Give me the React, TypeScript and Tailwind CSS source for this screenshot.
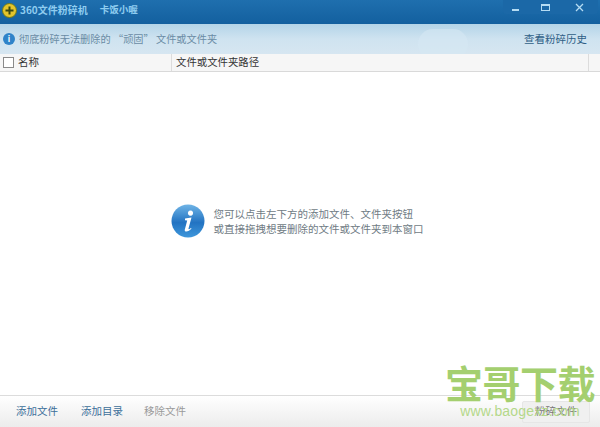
export default function App() {
  const font = { fontFamily: '"Noto Sans CJK SC", "Liberation Sans", sans-serif' };
  return (
    <div style={font} className="relative w-[600px] h-[427px] overflow-hidden bg-white flex flex-col">
      {/* Title bar */}
      <div className="h-[24px] shrink-0 flex items-start justify-between bg-gradient-to-b from-[#1f6fae] to-[#13609f]">
        <div className="flex items-center h-[20px] pl-[2px] gap-[3px]">
          <svg width="15" height="15" viewBox="0 0 15 15">
            <circle cx="7.5" cy="7.5" r="7" fill="#e3c52c" stroke="#6d7a1e" strokeWidth="1" />
            <path d="M7.5 3.5v8M3.5 7.5h8" stroke="#3b4a12" strokeWidth="2" />
          </svg>
          <span className="text-[10px] font-bold text-[#8fcdf0] leading-none">360文件粉碎机</span>
          <span className="text-[9.5px] font-bold text-[#8fcdf0] leading-none ml-[9px]">卡饭小喔</span>
        </div>
        <div className="flex h-[14px] w-[95px] mr-[2px] rounded-b-[3px] bg-[#1b68a7]">
          <div className="flex-1 flex items-center justify-center pr-[6px]">
            <div className="w-[7px] h-[2px] bg-[#b5dcf3] mt-[5px]" />
          </div>
          <div className="flex-1 flex items-center justify-center pr-[10px]">
            <div className="w-[9px] h-[7px] border border-[#b5dcf3] border-t-2" />
          </div>
          <div className="flex-1 flex items-center justify-center pr-[6px]">
            <svg width="9" height="9" viewBox="0 0 9 9">
              <path d="M1 1l7 7M8 1l-7 7" stroke="#b5dcf3" strokeWidth="1.3" />
            </svg>
          </div>
        </div>
      </div>
      {/* Info bar */}
      <div className="relative h-[30px] shrink-0 flex items-center justify-between bg-gradient-to-b from-[#b3d4e8] via-[#cfe3f0] to-[#d6e6f1] pl-[3px] pr-[13px] overflow-hidden">
        <div className="absolute left-[418px] top-[5px] w-[50px] h-[30px] rounded-full bg-[#d6e7f3] opacity-60" />
        <div className="relative flex items-center gap-[4px]">
          <div className="w-[12px] h-[12px] rounded-full bg-[#2f83c9] flex items-center justify-center text-white text-[8px] font-bold leading-none">i</div>
          <span className="text-[10.2px] text-[#6a8ca5] leading-none">彻底粉碎无法删除的 “顽固” 文件或文件夹</span>
        </div>
        <span className="relative text-[10.5px] text-[#2f5f86] leading-none">查看粉碎历史</span>
      </div>
      {/* Table header */}
      <div className="h-[18px] shrink-0 flex items-center bg-[#f6f6f6] border-b border-[#d9d9d9]">
        <div className="w-[172px] flex items-center pl-[3px] gap-[4px] border-r border-[#dcdcdc] h-full">
          <div className="w-[11px] h-[11px] border border-[#8a8a8a] bg-white" />
          <span className="text-[10.5px] text-[#333] leading-none">名称</span>
        </div>
        <div className="flex-1 pl-[4px] h-full flex items-center border-r border-[#dcdcdc] mr-[11px]">
          <span className="text-[10.4px] text-[#333] leading-none">文件或文件夹路径</span>
        </div>
      </div>
      {/* Body */}
      <div className="flex-1 flex items-center justify-center pr-[6px] pb-[26px]">
        <div className="flex items-center gap-[9px]">
          <svg width="34" height="34" viewBox="0 0 34 34">
            <defs>
              <linearGradient id="g" x1="0" y1="0" x2="0" y2="1">
                <stop offset="0" stopColor="#6fb4e6" />
                <stop offset="0.55" stopColor="#2273c2" />
                <stop offset="1" stopColor="#3f97db" />
              </linearGradient>
            </defs>
            <circle cx="17" cy="17" r="16.5" fill="url(#g)" />
            <path d="M19.5 6.5a2.6 2.6 0 1 0 .01 0zM14 14.5l6.5-1-3 11c-.2 1 .6 1 2.5-.6l.5.6c-2.5 3-6.800 4-6.800 1.400l2.500-9.400-2.200-.2z" fill="#fff" />
          </svg>
          <div className="flex flex-col text-[10.5px] leading-[15px] text-[#6f7b84]">
            <span>您可以点击左下方的添加文件、文件夹按钮</span>
            <span>或直接拖拽想要删除的文件或文件夹到本窗口</span>
          </div>
        </div>
      </div>
      {/* Footer */}
      <div className="h-[32px] shrink-0 flex items-center justify-between border-t border-[#dcdcdc] bg-gradient-to-b from-white to-[#ececec] pl-[16px] pr-[10px]">
        <div className="flex items-center text-[10.5px] leading-none">
          <span className="text-[#3c6f9a]">添加文件</span>
          <span className="text-[#3c6f9a] ml-[23px]">添加目录</span>
          <span className="text-[#9a9a9a] ml-[21px]">移除文件</span>
        </div>
        <div className="w-[68px] h-[22px] flex items-center justify-center rounded-[2px] border border-[#e6e6e6] bg-[#f0f0f0] text-[10.5px] text-[#777] leading-none">
          粉碎文件
        </div>
      </div>
      {/* Watermark */}
      <div className="absolute left-[444px] top-[360px] w-[152px] flex flex-col items-center pointer-events-none">
        <span className="text-[38px] font-bold leading-[44px] text-[#a4cf6f] tracking-[-0.5px] whitespace-nowrap">宝哥下载</span>
        <span style={{ fontFamily: '"Liberation Sans", sans-serif' }} className="text-[14px] leading-[15px] text-[#b4d88a] whitespace-nowrap tracking-[0.2px]">www.baogexz.com</span>
      </div>
    </div>
  );
}
